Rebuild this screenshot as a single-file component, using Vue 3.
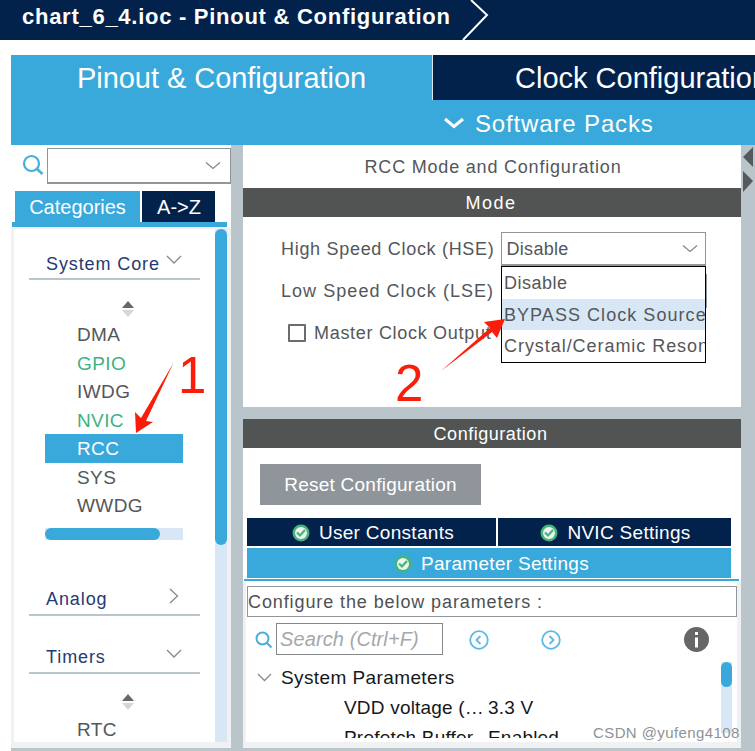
<template>
  <div class="page">
    <header class="title-bar">
      <span class="title">chart_6_4.ioc - Pinout &amp; Configuration</span>
      <svg class="title-chevron" width="30" height="40" viewBox="0 0 30 40">
        <path d="M9 0 L25 15 L1 40" fill="none" stroke="#fff" stroke-width="2" />
      </svg>
    </header>

    <nav class="main-tabs">
      <div class="tab-pinout">Pinout &amp; Configuration</div>
      <div class="tab-right">
        <div class="tab-clock">Clock Configuration</div>
        <div class="tab-packs">
          <svg width="22" height="12" viewBox="0 0 22 12">
            <path d="M2 2 L11 9.500 L20 2" fill="none" stroke="#fff" stroke-width="3" />
          </svg>
          <span>Software Packs</span>
        </div>
      </div>
    </nav>

    <div class="body">
      <aside class="left">
        <div class="search-row">
          <svg class="search-icon" width="22" height="22" viewBox="0 0 22 22">
            <circle cx="9.500" cy="9.500" r="7.500" fill="none" stroke="#45aee0" stroke-width="2.200" />
            <path d="M15 15 L20.500 20" stroke="#45aee0" stroke-width="2.500" />
          </svg>
          <div class="combo">
            <svg width="16" height="10" viewBox="0 0 16 10">
              <path d="M1 1.500 L8 7.500 L15 1.500" fill="none" stroke="#85898c" stroke-width="1.300" />
            </svg>
          </div>
        </div>
        <div class="left-tabs">
          <div class="ltab ltab-on">Categories</div>
          <div class="ltab ltab-off">A-&gt;Z</div>
        </div>
        <div class="left-rule"></div>

        <div class="tree">
          <div class="tree-main">
            <div class="cat cat-first">
              <span>System Core</span>
              <svg class="cat-icon-down" width="16" height="10" viewBox="0 0 16 10">
                <path d="M1 1 L8 8 L15 1" fill="none" stroke="#85898c" stroke-width="1.300" />
              </svg>
            </div>
            <div class="sort">
              <svg width="14" height="16" viewBox="0 0 14 16">
                <path d="M7 0 L13 7 L1 7 Z" fill="#66696c" />
                <path d="M1 9 L13 9 L7 16 Z" fill="#d3d5d7" />
              </svg>
            </div>
            <ul class="items">
              <li v-for="item in coreItems" :key="item.name" :class="item.cls">{{ item.name }}</li>
            </ul>
            <div class="hbar"><div class="hbar-thumb"></div></div>

            <div class="cat cat-analog">
              <span>Analog</span>
              <svg class="cat-icon-right" width="10" height="16" viewBox="0 0 10 16">
                <path d="M1 1 L8.500 8 L1 15" fill="none" stroke="#85898c" stroke-width="1.300" />
              </svg>
            </div>
            <div class="cat cat-timers">
              <span>Timers</span>
              <svg class="cat-icon-down" width="16" height="10" viewBox="0 0 16 10">
                <path d="M1 1 L8 8 L15 1" fill="none" stroke="#85898c" stroke-width="1.300" />
              </svg>
            </div>
            <div class="sort sort-timers">
              <svg width="14" height="16" viewBox="0 0 14 16">
                <path d="M7 0 L13 7 L1 7 Z" fill="#66696c" />
                <path d="M1 9 L13 9 L7 16 Z" fill="#d3d5d7" />
              </svg>
            </div>
            <ul class="items items-timers">
              <li>RTC</li>
            </ul>
          </div>
          <div class="vbar"><div class="vbar-thumb"></div></div>
        </div>
      </aside>

      <main class="right">
        <section class="mode-panel">
          <div class="panel-title">RCC Mode and Configuration</div>
          <div class="dark-head mode-head">Mode</div>
          <div class="form">
            <div class="form-row form-row-hse">
              <label class="form-label">High Speed Clock (HSE)</label>
              <div class="select">
                <span class="select-value">Disable</span>
                <svg width="16" height="10" viewBox="0 0 16 10">
                  <path d="M1 1.500 L8 7.500 L15 1.500" fill="none" stroke="#85898c" stroke-width="1.300" />
                </svg>
              </div>
            </div>
            <div class="form-row form-row-lse">
              <label class="form-label">Low Speed Clock (LSE)</label>
              <div class="select select-lse"></div>
            </div>
            <div class="form-row form-row-mco">
              <span class="checkbox"></span>
              <label class="form-label">Master Clock Output</label>
            </div>
            <ul class="popup">
              <li>Disable</li>
              <li class="popup-on">BYPASS Clock Source</li>
              <li class="popup-long">Crystal/Ceramic Resonator</li>
            </ul>
          </div>
        </section>

        <section class="config-panel">
          <div class="dark-head config-head">Configuration</div>
          <button class="reset">Reset Configuration</button>
          <div class="cfg-tabs">
            <div v-for="tab in cfgTabs" :key="tab.name" class="cfg-tab" :class="tab.cls">
              <svg width="18" height="18" viewBox="0 0 18 18">
                <circle cx="9" cy="9" r="8.500" fill="#46b27c" />
                <circle cx="9" cy="9" r="6" fill="#e9f5ee" />
                <path d="M5 8.500 L8 11.500 L13 6" fill="none" stroke="#46b27c" stroke-width="2.200" />
              </svg>
              <span>{{ tab.name }}</span>
            </div>
          </div>
          <div class="cfg-rule"></div>
          <div class="cfg-lower">
            <div class="cfg-box">Configure the below parameters :</div>
            <div class="tools">
              <svg class="tools-search" width="18" height="18" viewBox="0 0 18 18">
                <circle cx="7.500" cy="7.500" r="6" fill="none" stroke="#45aee0" stroke-width="2" />
                <path d="M12 12 L16.500 16.500" stroke="#45aee0" stroke-width="2" />
              </svg>
              <div class="tools-input">Search (Ctrl+F)</div>
              <svg class="nav-prev" width="20" height="20" viewBox="0 0 20 20">
                <circle cx="10" cy="10" r="8.800" fill="none" stroke="#5db8e4" stroke-width="1.800" />
                <path d="M11.500 6 L7.500 10 L11.500 14" fill="none" stroke="#5db8e4" stroke-width="1.800" />
              </svg>
              <svg class="nav-next" width="20" height="20" viewBox="0 0 20 20">
                <circle cx="10" cy="10" r="8.800" fill="none" stroke="#5db8e4" stroke-width="1.800" />
                <path d="M8.500 6 L12.500 10 L8.500 14" fill="none" stroke="#5db8e4" stroke-width="1.800" />
              </svg>
              <svg class="info" width="25" height="25" viewBox="0 0 25 25">
                <circle cx="12.500" cy="12.500" r="12.500" fill="#666" />
                <rect x="11" y="5" width="3" height="3" fill="#fff" />
                <rect x="11" y="10.500" width="3" height="10" fill="#fff" />
              </svg>
            </div>
            <div class="params">
              <div class="params-list">
                <div class="param-group">
                  <svg width="15" height="9" viewBox="0 0 15 9">
                    <path d="M1 1 L7.500 7.500 L14 1" fill="none" stroke="#85898c" stroke-width="1.300" />
                  </svg>
                  <span>System Parameters</span>
                </div>
                <div class="param"><span class="param-name">VDD voltage (…</span><span>3.3 V</span></div>
                <div class="param"><span class="param-name">Prefetch Buffer</span><span>Enabled</span></div>
              </div>
              <div class="param-bar"><div class="param-thumb"></div></div>
            </div>
          </div>
        </section>
      </main>

      <div class="edge">
        <svg width="12" height="46" viewBox="0 0 12 46">
          <path d="M10 0 L10 20 L0 10 Z" fill="#56595c" />
          <path d="M0 24 L10 34 L0 45 Z" fill="#56595c" />
        </svg>
      </div>
    </div>

    <!-- red marks pasted on top of the screenshot -->
    <svg class="marks" width="755" height="751" viewBox="0 0 755 751">
      <polygon points="173.500,363 146,421 153,422 136,433 135,412 141,418" fill="#fa1e0a" />
      <polygon points="441,371 490,328 484,322 505,319 497,338 492,332" fill="#fa1e0a" />
    </svg>
    <span class="mark-num mark-1">1</span>
    <span class="mark-num mark-2">2</span>
    <span class="watermark">CSDN @yufeng4108</span>
  </div>
</template>

<script setup>
const coreItems = [
  { name: 'DMA', cls: '' },
  { name: 'GPIO', cls: 'ok' },
  { name: 'IWDG', cls: '' },
  { name: 'NVIC', cls: 'ok' },
  { name: 'RCC', cls: 'active' },
  { name: 'SYS', cls: '' },
  { name: 'WWDG', cls: '' },
]

const cfgTabs = [
  { name: 'User Constants', cls: 'cfg-user' },
  { name: 'NVIC Settings', cls: 'cfg-nvic' },
  { name: 'Parameter Settings', cls: 'cfg-param' },
]
</script>

<style>
html,
body {
  margin: 0;
  background: #fff;
}
</style>

<style scoped>
.page {
  position: relative;
  width: 755px;
  height: 751px;
  overflow: hidden;
  background: #fff;
  font-family: "Liberation Sans", Arial, sans-serif;
  color: #54575a;
}

.title-bar {
  display: flex;
  height: 40px;
  padding-left: 22px;
  background: #02224c;
  color: #fff;
}
.title {
  font-size: 22px;
  font-weight: 700;
  line-height: 33px;
  letter-spacing: 0.73px;
  white-space: nowrap;
}
.title-chevron {
  margin-left: 11px;
  flex: none;
}

.main-tabs {
  display: flex;
  height: 90px;
  margin: 15px 0 0 11px;
  background: #39a9dc;
  color: #fff;
}
.tab-pinout {
  width: 421px;
  padding-left: 66px;
  box-sizing: border-box;
  font-size: 29px;
  line-height: 46px;
  letter-spacing: -0.05px;
  white-space: nowrap;
}
.tab-right {
  flex: 1;
  min-width: 0;
}
.tab-clock {
  height: 45px;
  padding-left: 82px;
  border-left: 1px solid #dfe7ec;
  background: #02224c;
  font-size: 29px;
  line-height: 46px;
  white-space: nowrap;
  overflow: hidden;
}
.tab-packs {
  display: flex;
  align-items: center;
  gap: 10px;
  box-sizing: border-box;
  height: 45px;
  padding: 2px 0 0 11px;
  font-size: 24px;
  letter-spacing: 0.85px;
}
.tab-packs svg {
  margin-top: -2px;
}

.body {
  display: flex;
  height: 606px;
  margin-left: 11px;
  background: #b9c4cb;
}

.left {
  display: flex;
  flex-direction: column;
  width: 220px;
  height: 603px;
  background: #fff;
}
.search-row {
  display: flex;
  align-items: flex-start;
  padding: 3px 0 0 11px;
  height: 46px;
  box-sizing: border-box;
}
.search-icon {
  flex: none;
  margin-top: 6px;
}
.combo {
  display: flex;
  align-items: center;
  justify-content: flex-end;
  box-sizing: border-box;
  width: 184px;
  height: 36px;
  margin-left: 3px;
  padding-right: 9px;
  border: 1px solid #90969b;
  border-bottom-width: 2px;
}
.left-tabs {
  display: flex;
  gap: 2px;
  height: 31px;
  padding-left: 4px;
  color: #fff;
  font-size: 20px;
  line-height: 32px;
  text-align: center;
}
.ltab-on {
  width: 125px;
  background: #39a9dc;
}
.ltab-off {
  width: 73px;
  padding-left: 1px;
  box-sizing: border-box;
  background: #02224c;
}
.left-rule {
  height: 5px;
  width: 215px;
  margin-left: 1px;
  background: #39a9dc;
}
.tree {
  display: flex;
  flex: 1;
  min-height: 0;
  padding: 2px 4px 6px 3px;
  background: #f0f1f2;
}
.tree-main {
  flex: 1;
  min-width: 0;
  overflow: hidden;
  background: #fff;
}
.cat {
  display: flex;
  justify-content: space-between;
  margin: 0 15px;
  padding-left: 17px;
  border-bottom: 2px solid #b9c4cb;
  color: #253a73;
  font-size: 18px;
  letter-spacing: 0.9px;
  line-height: 24px;
}
.cat-first {
  margin-top: 21px;
  height: 28px;
}
.cat-first span {
  padding-top: 2px;
}
.cat-timers span,
.cat-analog span {
  padding-top: 1px;
}
.cat-icon-down {
  margin: 5px 18px 0 0;
}
.cat-icon-right {
  margin: 2px 21px 0 0;
}
.cat-analog {
  margin-top: 46px;
  height: 28px;
}
.cat-timers {
  margin-top: 28px;
  height: 28px;
}
.sort {
  display: flex;
  justify-content: center;
  margin: 21px 0 0 0;
  padding-left: 27px;
}
.sort-timers {
  margin-top: 20px;
}
.items {
  margin: 3px 0 0 31px;
  padding: 0;
  list-style: none;
  font-size: 19px;
  letter-spacing: 0.4px;
  width: 138px;
}
.items li {
  height: 28.500px;
  padding-left: 32px;
  line-height: 29px;
}
.items li.ok {
  color: #3fb27f;
}
.items li.active {
  background: #39a9dc;
  color: #fff;
}
.items-timers {
  margin-top: 5px;
}
.hbar {
  width: 138px;
  height: 12px;
  margin: 8px 0 0 31px;
  background: #d7e7f5;
}
.hbar-thumb {
  width: 115px;
  height: 100%;
  border-radius: 6px;
  background: #39a9dc;
}
.vbar {
  flex: none;
  width: 12px;
  background: #d7e7f5;
}
.vbar-thumb {
  height: 316px;
  border-radius: 6px;
  background: #39a9dc;
}

.right {
  width: 498px;
  margin-left: 12px;
  display: flex;
  flex-direction: column;
  gap: 12px;
}
.mode-panel {
  height: 262px;
  background: #fff;
}
.panel-title {
  box-sizing: border-box;
  height: 43px;
  padding-left: 2px;
  font-size: 18px;
  line-height: 45px;
  letter-spacing: 0.8px;
  text-align: center;
}
.dark-head {
  height: 29px;
  background: #525453;
  color: #fff;
  font-size: 18px;
  line-height: 30px;
  text-align: center;
}
.mode-head {
  padding-right: 2px;
  letter-spacing: 1.5px;
}
.config-head {
  padding-right: 3px;
  line-height: 31px;
  letter-spacing: 0.52px;
}
.form {
  position: relative;
  font-size: 18px;
}
.form-row {
  display: flex;
  align-items: center;
  letter-spacing: 0.7px;
  white-space: nowrap;
}
.form-label {
  padding-top: 1px;
}
.form-row-hse {
  height: 34px;
  margin-top: 15px;
  padding-left: 38px;
}
.form-row-lse {
  height: 34px;
  margin-top: 8px;
  padding-left: 38px;
  letter-spacing: 1.05px;
}
.form-row-mco {
  height: 18px;
  margin-top: 16px;
  padding-left: 45px;
  gap: 8px;
}
.select {
  display: flex;
  align-items: center;
  justify-content: space-between;
  box-sizing: border-box;
  width: 205px;
  height: 34px;
  margin-left: 7px;
  padding: 0 7px 0 4px;
  border: 1px solid #90969b;
  border-bottom-width: 2px;
  letter-spacing: 0.3px;
}
.select-value {
  padding-top: 1px;
}
.form-row-lse .select-lse {
  width: 205px;
  margin-left: 8px;
}
.checkbox {
  box-sizing: border-box;
  width: 18px;
  height: 18px;
  border: 2px solid #6a6d70;
  border-radius: 1px;
}
.popup {
  position: absolute;
  left: 258px;
  top: 34px;
  box-sizing: border-box;
  width: 205px;
  height: 97px;
  margin: 0;
  padding: 0;
  border: 1px solid #000;
  background: #fff;
  list-style: none;
  overflow: hidden;
  white-space: nowrap;
  letter-spacing: 0.5px;
}
.popup li {
  height: 31.500px;
  padding-left: 2px;
  line-height: 33px;
}
.popup .popup-on {
  background: #d7e7f5;
  letter-spacing: 1.05px;
}
.popup .popup-long {
  letter-spacing: 0.95px;
}

.config-panel {
  flex: 1;
  min-height: 0;
  margin-bottom: 3px;
  overflow: hidden;
  background: #fff;
  border-bottom: 6px solid #f0f1f2;
}
.reset {
  display: block;
  width: 221px;
  height: 41px;
  margin: 16px 0 13px 17px;
  padding: 0;
  border: 0;
  background: #8f959b;
  color: #fff;
  font: 19px "Liberation Sans", Arial, sans-serif;
  letter-spacing: 0.25px;
}
.cfg-tabs {
  display: grid;
  grid-template-columns: 249px 233px;
  gap: 2px;
  margin-left: 4px;
  color: #fff;
  font-size: 19px;
}
.cfg-tab {
  display: flex;
  align-items: center;
  justify-content: center;
  gap: 9px;
  box-sizing: border-box;
  height: 28px;
  padding-top: 1px;
  background: #02224c;
  letter-spacing: 0.3px;
}
.cfg-user {
  padding-left: 3px;
}
.cfg-nvic {
  padding-left: 2px;
}
.cfg-param {
  grid-column: 1 / 3;
  height: 30px;
  padding-left: 5px;
  background: #39a9dc;
}
.cfg-rule {
  width: 495px;
  height: 2px;
  margin: 1px 0 0 1px;
  background: #39a9dc;
}
.cfg-lower {
  height: 161px;
  border-left: 3px solid #f0f1f2;
  border-right: 4px solid #f0f1f2;
  overflow: hidden;
}
.cfg-box {
  box-sizing: border-box;
  width: 490px;
  height: 31px;
  margin: 5px 0 0 1px;
  border: 1px solid #90969b;
  color: #4e5154;
  font-size: 18px;
  line-height: 31px;
  letter-spacing: 0.9px;
  white-space: nowrap;
}
.tools {
  display: flex;
  align-items: center;
  height: 32px;
  margin-top: 6px;
  padding-left: 9px;
}
.tools-search,
.nav-prev,
.nav-next {
  flex: none;
  margin-top: 2px;
}
.tools-input {
  box-sizing: border-box;
  width: 167px;
  height: 32px;
  margin-left: 3px;
  padding-left: 3px;
  border: 1.500px solid #85898c;
  color: #a5a8ab;
  font-size: 20px;
  font-style: italic;
  line-height: 31px;
  letter-spacing: 0.1px;
  white-space: nowrap;
}
.nav-prev {
  margin-left: 26px;
}
.nav-next {
  margin-left: 52px;
}
.info {
  margin-left: 123px;
}
.params {
  display: flex;
  height: 76px;
  margin-top: 7px;
  padding-left: 11px;
  overflow: hidden;
}
.params-list {
  width: 464px;
  color: #16181a;
  font-size: 19px;
  white-space: nowrap;
}
.param-group {
  display: flex;
  align-items: center;
  gap: 9px;
  height: 31px;
  letter-spacing: 0.4px;
}
.param {
  display: flex;
  height: 30px;
  padding-left: 87px;
  line-height: 30px;
  letter-spacing: 0.2px;
}
.param-name {
  width: 144px;
}
.param-bar {
  width: 11px;
  height: 71px;
  background: #d7e7f5;
}
.param-thumb {
  height: 25px;
  border-radius: 6px;
  background: #39a9dc;
}

.edge {
  flex: 1;
  padding: 2px 0 0 2px;
  line-height: 0;
}

.marks {
  position: absolute;
  left: 0;
  top: 0;
  pointer-events: none;
}
.mark-num {
  position: absolute;
  color: #fa1e0a;
  font-size: 51px;
  line-height: 51px;
}
.mark-1 {
  left: 178px;
  top: 350px;
}
.mark-2 {
  left: 395px;
  top: 358px;
}
.watermark {
  position: absolute;
  left: 593px;
  top: 724px;
  color: #8f9295;
  font-size: 15px;
  letter-spacing: 0.4px;
  white-space: nowrap;
}
</style>
